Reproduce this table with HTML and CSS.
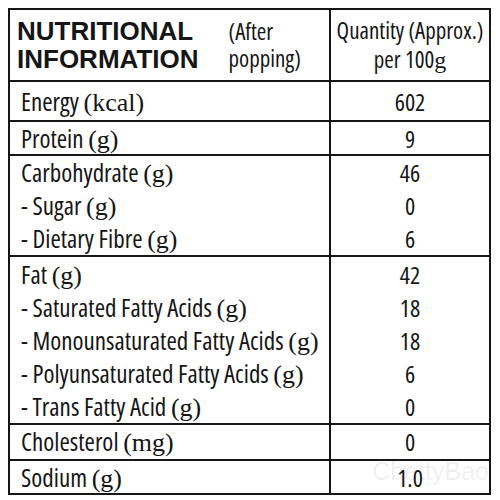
FILE: index.html
```html
<!DOCTYPE html><html><head><meta charset="utf-8">
<title>Nutritional Information</title>
<link rel="stylesheet" href="styles.css">
</head><body>

<div class="wrap">
<table class="nutri">
<colgroup><col class="c1"><col class="c2"></colgroup>
<tr class="head">
	<th><div class="hcell"><span class="title">NUTRITIONAL<br>INFORMATION</span><span class="note">(After<br>popping)</span></div></th>
	<th class="qty">Quantity (Approx.)<br>per 100<span class="u">g</span></th>
</tr>
<tr class="energy">
	<td>Energy <span class="u">(kcal)</span></td>
	<td>602</td>
</tr>
<tr class="one">
	<td>Protein <span class="u">(g)</span></td>
	<td>9</td>
</tr>
<tr class="grp">
	<td><div>Carbohydrate <span class="u">(g)</span></div><div>- Sugar <span class="u">(g)</span></div><div>- Dietary Fibre <span class="u">(g)</span></div></td>
	<td><div>46</div><div>0</div><div>6</div></td>
</tr>
<tr class="grp fat">
	<td><div>Fat <span class="u">(g)</span></div><div>- Saturated Fatty Acids <span class="u">(g)</span></div><div>- Monounsaturated Fatty Acids <span class="u">(g)</span></div><div>- Polyunsaturated Fatty Acids <span class="u">(g)</span></div><div>- Trans Fatty Acid <span class="u">(g)</span></div></td>
	<td><div>42</div><div>18</div><div>18</div><div>6</div><div>0</div></td>
</tr>
<tr class="one chol">
	<td>Cholesterol <span class="u">(mg)</span></td>
	<td>0</td>
</tr>
<tr class="one last">
	<td>Sodium <span class="u">(g)</span></td>
	<td>1.0</td>
</tr>
</table>
<span class="mark">ChettyBao</span>
</div>

</body></html>
```

FILE: styles.css
```css
body {
	margin: 8px;
	background: #fff;
	color: #161616;
	font-family: "Open Sans", sans-serif;
	font-stretch: 75%;
}
.wrap {
	position: relative;
	width: 483px;
}
.nutri {
	border-collapse: collapse;
	width: 481px;
	border: 2px solid #161616;
	border-bottom: none;
	table-layout: fixed;
}
.nutri col.c1 {
	width: 321px;
}
.nutri col.c2 {
	width: 160px;
}
.nutri th, .nutri td {
	border: 2px solid #161616;
	padding: 0 10px;
	font-size: 25px;
	line-height: 33px;
	vertical-align: middle;
	font-weight: normal;
	white-space: nowrap;
}
.nutri td:first-child {
	text-align: left;
	padding-left: 11px;
}
.nutri td:last-child {
	text-align: center;
	font-size: 24px;
}
.nutri .u {
	font-family: "Liberation Serif", serif;
	font-stretch: normal;
	font-size: 26px;
	line-height: 10px;
}
.head th {
	height: 70px;
	padding: 0;
}
.hcell {
	display: flex;
	align-items: center;
	gap: 30px;
	padding-left: 7px;
}
.title {
	font-family: "Liberation Sans", sans-serif;
	font-stretch: normal;
	font-weight: bold;
	font-size: 26px;
	line-height: 28px;
	text-align: left;
}
.note {
	font-size: 23px;
	line-height: 27px;
	text-align: left;
}
.qty {
	font-size: 23px !important;
	line-height: 29px !important;
	text-align: center;
}
.qty .u {
	font-size: 24px;
}
.one td {
	line-height: 31px;
	padding-top: 1px;
	padding-bottom: 0;
}
.energy td {
	line-height: 31px;
	padding-top: 4px;
	padding-bottom: 3px;
}
.grp td {
	padding-top: 0;
	padding-bottom: 0;
}
.fat td {
	padding-top: 1px;
}
.chol td {
	padding-bottom: 2px;
}
.mark {
	position: absolute;
	right: 2px;
	bottom: 9px;
	font-family: "Liberation Sans", sans-serif;
	font-stretch: normal;
	font-size: 25px;
	line-height: 29px;
	color: rgba(0, 0, 0, 0.07);
	pointer-events: none;
}
```
